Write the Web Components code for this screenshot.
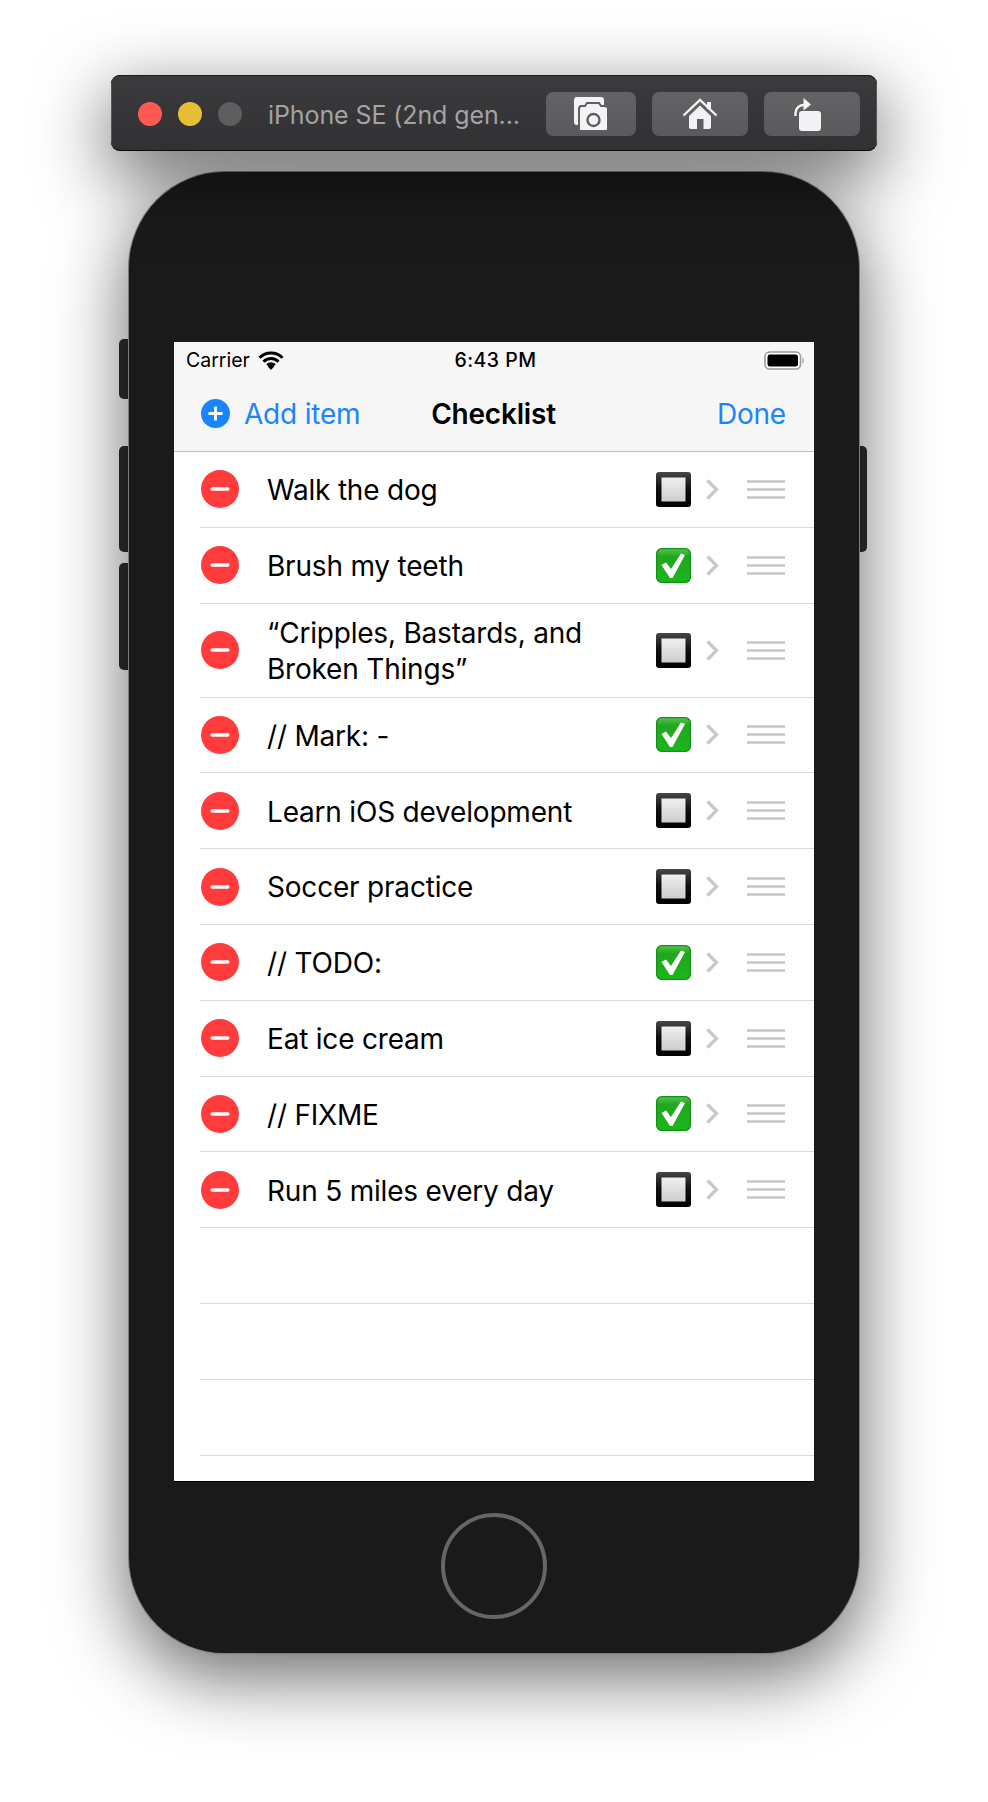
<!DOCTYPE html>
<html>
<head>
<meta charset="utf-8">
<title>Checklist</title>
<style>
  html, body { margin: 0; background: #fff; }
  body { font-family: Inter, "Liberation Sans", sans-serif; height: 1802px; overflow: hidden; }
</style>
</head>
<body>
<sim-window>
  <sim-titlebar slot="bar" name="iPhone SE (2nd gen..."></sim-titlebar>
  <status-bar carrier="Carrier" time="6:43 PM"></status-bar>
  <nav-bar title="Checklist"></nav-bar>
  <check-row>Walk the dog</check-row>
  <check-row checked>Brush my teeth</check-row>
  <check-row>“Cripples, Bastards, and Broken Things”</check-row>
  <check-row checked>// Mark: -</check-row>
  <check-row>Learn iOS development</check-row>
  <check-row>Soccer practice</check-row>
  <check-row checked>// TODO:</check-row>
  <check-row>Eat ice cream</check-row>
  <check-row checked>// FIXME</check-row>
  <check-row>Run 5 miles every day</check-row>
  <check-row empty></check-row>
  <check-row empty></check-row>
  <check-row empty></check-row>
  <check-row empty></check-row>
</sim-window>

<script>
class SimWindow extends HTMLElement {
  constructor() {
    super();
    this.attachShadow({mode: "open"});
    this.shadowRoot.innerHTML = `
    <style>
      :host {
        display: flex;
        flex-direction: column;
        align-items: center;
        padding-top: 75px;
      }
      .phone {
        position: relative;
        box-sizing: border-box;
        width: 730px;
        height: 1481px;
        margin-top: 21px;
        padding-top: 170px;
        display: flex;
        flex-direction: column;
        align-items: center;
        background: #1a1a1a;
        border-radius: 96px;
        box-shadow: 0 0 0 1px #7d7d7d, 0 22px 70px 4px rgba(0, 0, 0, 0.56);
      }
      /* side buttons stick out of the body */
      .side {
        position: absolute;
        width: 11px;
        background: #2e2e2e;
        z-index: -1;
      }
      .side.l { left: -10px; border-radius: 5px 0 0 5px; }
      .side.r { right: -8px; border-radius: 0 5px 5px 0; }
      .screen {
        width: 640px;
        height: 1139px;
        background: #fff;
        overflow: hidden;
        box-shadow: 0 1px 0 #000;
      }
      .home {
        box-sizing: border-box;
        width: 106px;
        height: 106px;
        margin-top: 32px;
        border: 4px solid #666;
        border-radius: 50%;
      }
      .stack { position: relative; z-index: 0; }
    </style>
    <slot name="bar"></slot>
    <div class="stack">
      <div class="phone">
        <div class="side l" style="top:167px;height:60px"></div>
        <div class="side l" style="top:274px;height:106px"></div>
        <div class="side l" style="top:391px;height:107px"></div>
        <div class="side r" style="top:274px;height:106px"></div>
        <div class="screen"><slot></slot></div>
        <div class="home"></div>
      </div>
    </div>
    `;
  }
}

class SimTitlebar extends HTMLElement {
  constructor() {
    super();
    this.attachShadow({mode: "open"});
  }
  connectedCallback() {
    this.shadowRoot.innerHTML = `
    <style>
      :host {
        display: flex;
        align-items: center;
        box-sizing: border-box;
        position: relative;
        z-index: 1;
        width: 766px;
        height: 76px;
        padding: 2px 17px 0 27px;
        background: linear-gradient(#3b3b3d, #313133);
        border-radius: 9px;
        box-shadow: inset 0 1px 0 #1c1c1c, inset 0 -1px 0 #0a0a0a, inset 1px 0 0 #55555a, inset -1px 0 0 #55555a, 0 22px 70px 4px rgba(0, 0, 0, 0.56);
      }
      .dot { width: 24px; height: 24px; border-radius: 50%; margin-right: 16px; flex: none; }
      .name {
        width: 278px;
        margin: 1px 0 0 10px;
        flex: none;
        font: 25px Inter, "Liberation Sans", sans-serif;
        letter-spacing: -0.1px;
        color: #a3a3a5;
        white-space: nowrap;
      }
      .btn {
        height: 44px;
        border-radius: 7px;
        background: linear-gradient(#636365, #5a5a5c);
        display: flex;
        align-items: center;
        justify-content: center;
        margin-left: 16px;
      }
      svg { display: block; }
    </style>
    <div class="dot" style="background:#ff5a52"></div>
    <div class="dot" style="background:#e6bf37"></div>
    <div class="dot" style="background:#5e5e60"></div>
    <div class="name">${this.getAttribute("name")}</div>
    <div class="btn" style="width:90px;margin-left:0">
      <svg width="40" height="40" viewBox="0 0 40 40">
        <rect x="3" y="3" width="30" height="28" rx="3" fill="#f3f3f5"/>
        <path d="M10 12h4l2-3h12l2 3h4a3 3 0 0 1 3 3v20a2 2 0 0 1-2 2H10a2 2 0 0 1-2-2V15a3 3 0 0 1 2-3z" fill="#f3f3f5" stroke="#5f5f61" stroke-width="2"/>
        <circle cx="22.5" cy="26" r="6" fill="none" stroke="#5c5c5e" stroke-width="2.4"/>
      </svg>
    </div>
    <div class="btn" style="width:96px">
      <svg width="40" height="40" viewBox="0 0 40 40">
        <path d="M3.500 21.500 20 6l16.500 15.500" fill="none" stroke="#f3f3f5" stroke-width="2.400"/>
        <rect x="27" y="8" width="4" height="7" fill="#f3f3f5"/>
        <path d="M9 22 20 11.500 31 22v11a2 2 0 0 1-2 2H11a2 2 0 0 1-2-2z" fill="#f3f3f5"/>
        <rect x="17" y="25" width="6.500" height="10" fill="#5f5f61"/>
      </svg>
    </div>
    <div class="btn" style="width:96px">
      <svg width="40" height="40" viewBox="0 0 40 40" style="margin-left:-5px">
        <rect x="9" y="17" width="22" height="20" rx="3" fill="#f3f3f5"/>
        <path d="M5.500 22v-3a8 8 0 0 1 8-8h1" fill="none" stroke="#f3f3f5" stroke-width="2.400"/>
        <path d="M13.500 4 21 10.500l-7.500 6z" fill="#f3f3f5"/>
      </svg>
    </div>
    `;
  }
}

class StatusBar extends HTMLElement {
  constructor() {
    super();
    this.attachShadow({mode: "open"});
  }
  connectedCallback() {
    this.shadowRoot.innerHTML = `
    <style>
      :host {
        display: grid;
        grid-template-columns: 1fr auto 1fr;
        align-items: center;
        box-sizing: border-box;
        height: 36px;
        padding: 0 9px 0 12px;
        background: #f6f6f6;
        color: #000;
        font: 19.5px Inter, "Liberation Sans", sans-serif;
      }
      .left { display: flex; align-items: center; gap: 8px; }
      .time { font-weight: 500; letter-spacing: 0.5px; }
      .right { display: flex; justify-content: flex-end; }
      svg { display: block; }
    </style>
    <div class="left">
      <span>${this.getAttribute("carrier")}</span>
      <svg width="26" height="19" viewBox="0 0 26 19">
        <path d="M1.500 6.800a16 16 0 0 1 23 0M5.500 10.700a10.300 10.300 0 0 1 15 0M9.300 14.300a5 5 0 0 1 7.400 0" fill="none" stroke="#000" stroke-width="3"/>
        <path d="M13 19 9.800 15.500a4.400 4.400 0 0 1 6.400 0z" fill="#000"/>
      </svg>
    </div>
    <div class="time">${this.getAttribute("time")}</div>
    <div class="right">
      <svg width="41" height="19" viewBox="0 0 41 19">
        <rect x="1" y="1" width="35.500" height="17" rx="4.500" fill="#fff" stroke="#9b9b9b" stroke-width="1.600"/>
        <rect x="3.500" y="3.500" width="30.500" height="12" rx="2.500" fill="#000"/>
        <path d="M38.500 6.500c1.800.6 1.800 5.400 0 6z" fill="#9b9b9b"/>
      </svg>
    </div>
    `;
  }
}

class NavBar extends HTMLElement {
  constructor() {
    super();
    this.attachShadow({mode: "open"});
  }
  connectedCallback() {
    this.shadowRoot.innerHTML = `
    <style>
      :host {
        display: grid;
        grid-template-columns: 1fr auto 1fr;
        align-items: center;
        box-sizing: border-box;
        height: 74px;
        padding: 0 28px 2px 27px;
        background: #f6f6f6;
        border-bottom: 1px solid #bcbcbc;
        font: 28px Inter, "Liberation Sans", sans-serif;
        letter-spacing: -0.2px;
        color: #1a84ff;
      }
      .add { display: flex; align-items: center; gap: 14px; }
      .title { color: #000; font-weight: 600; }
      .done { text-align: right; }
      svg { display: block; }
    </style>
    <div class="add">
      <svg width="29" height="29" viewBox="0 0 29 29">
        <circle cx="14.500" cy="14.500" r="14.500" fill="#1a84ff"/>
        <path d="M14.500 7.500v14M7.500 14.500h14" stroke="#fff" stroke-width="2.800"/>
      </svg>
      <span>Add item</span>
    </div>
    <div class="title">${this.getAttribute("title")}</div>
    <div class="done">Done</div>
    `;
  }
}

class CheckRow extends HTMLElement {
  constructor() {
    super();
    this.attachShadow({mode: "open"});
  }
  static get styles() {
    return `
    :host { display: block; padding-left: 26px; }
    .row {
      display: flex;
      align-items: center;
      box-sizing: border-box;
      min-height: 75.8px;
      padding: 0 29px 0 1px;
      border-bottom: 1px solid #dcdcdc;
    }
    .minus { flex: none; margin-right: 28px; }
    .text {
      flex: 1;
      padding: 11px 0 9px;
      font: 28px/36.5px Inter, "Liberation Sans", sans-serif;
      letter-spacing: -0.2px;
      color: #000;
    }
    .box { flex: none; margin: 0 15.5px 0 12px; }
    .chev { flex: none; margin-right: 28px; }
    svg { display: block; }
    `;
  }
  connectedCallback() {
    const checked = this.hasAttribute("checked");
    const box = checked ? `
      <svg class="box" width="35" height="35" viewBox="0 0 35 35">
        <defs><linearGradient id="g" x1="0" y1="0" x2="0" y2="1"><stop offset="0" stop-color="#5ac64e"/><stop offset="0.25" stop-color="#21a61f"/><stop offset="1" stop-color="#1ab81a"/></linearGradient></defs>
        <rect width="35" height="35" rx="6" fill="url(#g)"/>
        <rect x="0.600" y="0.600" width="33.800" height="33.800" rx="5.500" fill="none" stroke="#13921a" stroke-width="1.200"/>
        <path d="M5.500 17 10 14.500 15 21 25 5.500 29 7 16.500 30H14z" fill="#fff"/>
      </svg>` : `
      <svg class="box" width="35" height="35" viewBox="0 0 35 35">
        <defs>
          <linearGradient id="k" x1="0" y1="0" x2="0" y2="1"><stop offset="0" stop-color="#474747"/><stop offset="0.45" stop-color="#111"/><stop offset="1" stop-color="#000"/></linearGradient>
          <linearGradient id="i" x1="0" y1="0" x2="0" y2="1"><stop offset="0" stop-color="#f0f0f0"/><stop offset="1" stop-color="#cdcdcd"/></linearGradient>
        </defs>
        <rect width="35" height="35" rx="3" fill="url(#k)"/>
        <rect x="5.500" y="5.500" width="24" height="24" fill="url(#i)"/>
      </svg>`;
    const body = this.hasAttribute("empty") ? `` : `
      <svg class="minus" width="38" height="38" viewBox="0 0 38 38">
        <circle cx="19" cy="19" r="19" fill="#ff3b3b"/>
        <rect x="9.500" y="17.300" width="19" height="3.400" rx="1.700" fill="#fff"/>
      </svg>
      <div class="text"><slot></slot></div>
      ${box}
      <svg class="chev" width="13" height="21" viewBox="0 0 13 21">
        <path d="M1.500 1.500 10.500 10.500l-9 9" fill="none" stroke="#c7c7cc" stroke-width="3.200"/>
      </svg>
      <svg width="38" height="19" viewBox="0 0 38 19">
        <path d="M0 1.500h38M0 9.500h38M0 17.500h38" stroke="#c4c4c4" stroke-width="2.400"/>
      </svg>`;
    this.shadowRoot.innerHTML = `<style>${CheckRow.styles}</style><div class="row">${body}</div>`;
  }
}

window.customElements.define("sim-window", SimWindow);
window.customElements.define("sim-titlebar", SimTitlebar);
window.customElements.define("status-bar", StatusBar);
window.customElements.define("nav-bar", NavBar);
window.customElements.define("check-row", CheckRow);
</script>
</body>
</html>
